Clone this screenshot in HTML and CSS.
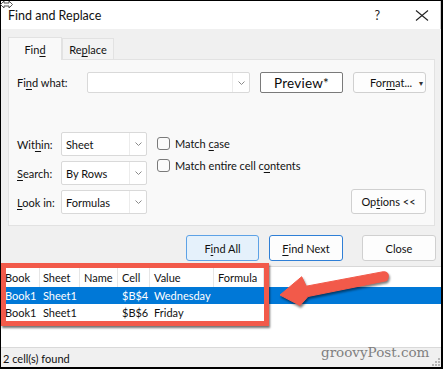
FILE: index.html
```html
<!DOCTYPE html>
<html>
<head>
<meta charset="utf-8">
<title>Find and Replace</title>
<link rel="stylesheet" href="styles.css">
</head>
<body>
<div class="dialog">
  <svg class="cursor" width="13" height="9" viewBox="0 0 13 9"><path d="M0.5 4.5 L4 1 L4 3 L9 3 L9 1 L12.5 4.5 L9 8 L9 6 L4 6 L4 8 Z" fill="#fff" stroke="#555" stroke-width="1"/></svg>
  <div class="titlebar">
    <span class="title">Find and Replace</span>
    <span class="help">?</span>
    <svg class="close-x" width="14" height="11" viewBox="0 0 14 11"><path d="M1 0.5 L13 10.5 M13 0.5 L1 10.5" stroke="#222" stroke-width="1.1" fill="none"/></svg>
  </div>
  <div class="tabs">
    <div class="tab active">Fin<u>d</u></div>
    <div class="tab">Re<u>p</u>lace</div>
  </div>
  <div class="panel">
    <div class="find-row">
      <span class="lbl find-lbl">Fi<u>n</u>d what:</span>
      <div class="combo find-combo">
        <span class="combo-text"></span>
        <span class="combo-btn"><svg width="7" height="4" viewBox="0 0 7 4"><path d="M0.5 0.5 L3.5 3.5 L6.5 0.5" stroke="#8a8a8a" fill="none"/></svg></span>
      </div>
      <button class="btn preview">Preview*</button>
      <button class="btn format"><span>For<u>m</u>at...</span><span class="caret">&#9662;</span></button>
    </div>
    <div class="opts">
      <div class="opt-grid">
        <span class="lbl">Wit<u>h</u>in:</span>
        <div class="combo sel"><span class="combo-text">Sheet</span><span class="combo-btn"><svg width="7" height="4" viewBox="0 0 7 4"><path d="M0.5 0.5 L3.5 3.5 L6.5 0.5" stroke="#8a8a8a" fill="none"/></svg></span></div>
        <span class="lbl"><u>S</u>earch:</span>
        <div class="combo sel"><span class="combo-text">By Rows</span><span class="combo-btn"><svg width="7" height="4" viewBox="0 0 7 4"><path d="M0.5 0.5 L3.5 3.5 L6.5 0.5" stroke="#8a8a8a" fill="none"/></svg></span></div>
        <span class="lbl"><u>L</u>ook in:</span>
        <div class="combo sel"><span class="combo-text">Formulas</span><span class="combo-btn"><svg width="7" height="4" viewBox="0 0 7 4"><path d="M0.5 0.5 L3.5 3.5 L6.5 0.5" stroke="#8a8a8a" fill="none"/></svg></span></div>
      </div>
      <div class="checks">
        <div class="check"><span class="box"></span><span>Match <u>c</u>ase</span></div>
        <div class="check"><span class="box"></span><span>Match entire cell c<u>o</u>ntents</span></div>
      </div>
      <button class="btn options">Op<u>t</u>ions &lt;&lt;</button>
    </div>
  </div>
  <div class="actions">
    <button class="btn act findall">F<u>i</u>nd All</button>
    <button class="btn act findnext"><u>F</u>ind Next</button>
    <button class="btn act close">Close</button>
  </div>
  <div class="results">
    <div class="row head">
      <span class="c c-book">Book</span><span class="c c-sheet">Sheet</span><span class="c c-name">Name</span><span class="c c-cell">Cell</span><span class="c c-value">Value</span><span class="c c-formula">Formula</span>
    </div>
    <div class="row sel-row">
      <span class="c c-book">Book1</span><span class="c c-sheet">Sheet1</span><span class="c c-name"></span><span class="c c-cell">$B$4</span><span class="c c-value">Wednesday</span><span class="c c-formula"></span>
    </div>
    <div class="row">
      <span class="c c-book">Book1</span><span class="c c-sheet">Sheet1</span><span class="c c-name"></span><span class="c c-cell">$B$6</span><span class="c c-value">Friday</span><span class="c c-formula"></span>
    </div>
  </div>
  <div class="status">2 cell(s) found</div>

  <div class="redbox"></div>
  <svg class="arrow" width="116" height="42" viewBox="0 0 116 42"><path d="M3 28 L24.7 9.7 L29.2 19.2 L106.3 4.7 Q111.5 4.6 111.3 9 Q111 13 109.7 13.7 L31 29.5 L23 38.5 Z" fill="#f25a4a" stroke="#f25a4a" stroke-width="1" stroke-linejoin="round"/></svg>
  <span class="watermark">groovyPost.com</span>
  <svg class="grip" width="9" height="9" viewBox="0 0 9 9"><g fill="#b5b5b5"><rect x="7" y="1" width="2" height="2"/><rect x="4" y="4" width="2" height="2"/><rect x="7" y="4" width="2" height="2"/><rect x="1" y="7" width="2" height="2"/><rect x="4" y="7" width="2" height="2"/><rect x="7" y="7" width="2" height="2"/></g></svg>
</div>
</body>
</html>
```

FILE: styles.css
```css
* { box-sizing: border-box; }
html, body { margin: 0; padding: 0; }
body {
  background: #000;
  width: 443px;
  height: 369px;
  overflow: hidden;
  font-family: Lato, "Noto Sans", sans-serif;
  font-size: 11px;
  color: #111;
}
u { text-decoration: underline; text-underline-offset: 1.5px; text-decoration-thickness: 1px; }

.dialog {
  position: relative;
  margin: 1px 0 0 1px;
  width: 440px;
  height: 366px;
  background: #f0f0f0;
  display: flex;
  flex-direction: column;
}

.cursor { position: absolute; left: -1px; top: -1px; }

.titlebar {
  height: 28px;
  flex: none;
  background: #fff;
  display: flex;
  align-items: center;
  padding-left: 7px;
  border-right: 1px solid #cfcfcf;
}
.title { font-size: 12.5px; color: #111; }
.help { margin-left: auto; font-size: 12.5px; margin-right: 35px; color: #222; }
.close-x { margin-right: 11px; }

.tabs {
  flex: none;
  height: 22px;
  margin-top: 8px;
  padding-left: 7px;
  display: flex;
  align-items: flex-end;
  position: relative;
  z-index: 1;
}
.tab {
  height: 21px;
  width: 52px;
  border: 1px solid #e2e2e2;
  border-bottom: none;
  background: #f3f3f3;
  display: flex;
  align-items: center;
  justify-content: center;
  padding-top: 1px;
}
.tab.active {
  width: 54px;
  height: 23px;
  margin-bottom: -1px;
  background: #f9f9f9;
}

.panel {
  flex: none;
  margin-left: 7px;
  width: 427px;
  background: #f9f9f9;
  border: 1px solid #e2e2e2;
  padding: 12px 8px 11px 8px;
}
.find-row {
  display: flex;
  align-items: center;
  height: 21px;
}
.lbl { white-space: nowrap; }
.find-lbl { width: 70px; flex: none; }

.combo {
  display: flex;
  background: #fff;
  border: 1px solid #d9d9d9;
  border-radius: 2px;
}
.combo-text { flex: 1; display: flex; align-items: center; padding-left: 4px; }
.combo-btn {
  width: 17px;
  flex: none;
  border-left: 1px solid #ececec;
  display: flex;
  align-items: center;
  justify-content: center;
}
.find-combo { width: 163px; height: 21px; }

.btn {
  font: inherit;
  color: #111;
  background: #fdfdfd;
  border: 1px solid #d0d0d0;
  border-radius: 3px;
  padding: 0;
  display: flex;
  align-items: center;
  justify-content: center;
}
.preview {
  margin-left: 10px;
  width: 83px;
  height: 21px;
  border-color: #7a7a7a;
  border-radius: 2px;
  background: #fff;
  font-size: 13.5px;
  color: #0a0a0a;
  letter-spacing: 0.2px;
}
.format {
  margin-left: 10px;
  width: 73px;
  height: 21px;
  justify-content: flex-start;
  padding-left: 16px;
}
.caret { margin-left: auto; margin-right: 2px; font-size: 8px; color: #333; }

.opts {
  margin-top: 39px;
  display: flex;
  align-items: flex-start;
}
.opt-grid {
  display: grid;
  grid-template-columns: 44px 86px;
  grid-auto-rows: 24px;
  row-gap: 5px;
  align-items: center;
}
.sel { height: 24px; }
.sel .combo-text { padding-left: 4px; }
.checks {
  margin-left: 10px;
  display: flex;
  flex-direction: column;
}
.check {
  height: 22px;
  display: flex;
  align-items: center;
}
.box {
  width: 13px;
  height: 13px;
  border: 1px solid #7a7a7a;
  border-radius: 3px;
  background: #fbfbfb;
  margin-right: 5px;
}
.options {
  margin-left: auto;
  align-self: flex-end;
  width: 75px;
  height: 25px;
}

.actions {
  flex: none;
  margin-top: 9px;
  height: 26px;
  display: flex;
  justify-content: flex-end;
  padding-right: 5px;
}
.act { width: 74px; height: 26px; }
.findall { width: 73px; background: #e5f1fb; border-color: #5da2e6; }
.findnext { margin-left: 10px; border-color: #2f7fd6; background: #fdfdfd; }
.close { margin-left: 19px; }

.results {
  flex: none;
  margin-top: 5px;
  height: 81px;
  background: #fff;
  border-top: 1px solid #d8d8d8;
}
.row {
  display: flex;
  height: 17px;
  align-items: center;
}
.row.head { height: 20px; }
.c { flex: none; padding-left: 4px; white-space: nowrap; height: 100%; display: flex; align-items: center; }
.head .c { border-right: 1px solid #e6e6e6; }
.c-book { width: 39px; padding-left: 4px; }
.c-sheet { width: 40px; padding-left: 3px; }
.c-name { width: 38px; }
.c-cell { width: 32px; }
.c-value { width: 64px; }
.c-formula { width: 50px; }
.sel-row { background: #0078d7; color: #fff; }

.status {
  flex: 1;
  border-top: 1px solid #d9d9d9;
  display: flex;
  align-items: center;
  padding-left: 2px;
  padding-top: 2px;
}

.redbox {
  position: absolute;
  left: 0;
  top: 262px;
  width: 268px;
  height: 63px;
  border: 5px solid #f25a4a;
  box-shadow: 1px 2px 2px rgba(0, 0, 0, 0.55);
}
.arrow {
  position: absolute;
  left: 276px;
  top: 266px;
  filter: drop-shadow(1px 2px 1px rgba(0, 0, 0, 0.5));
}
.watermark {
  position: absolute;
  left: 320px;
  top: 344px;
  font-family: "DejaVu Serif", serif;
  font-size: 13.5px;
  line-height: 15px;
  color: #7f7f7f;
}
.grip { position: absolute; right: 1px; bottom: 1px; }
```
